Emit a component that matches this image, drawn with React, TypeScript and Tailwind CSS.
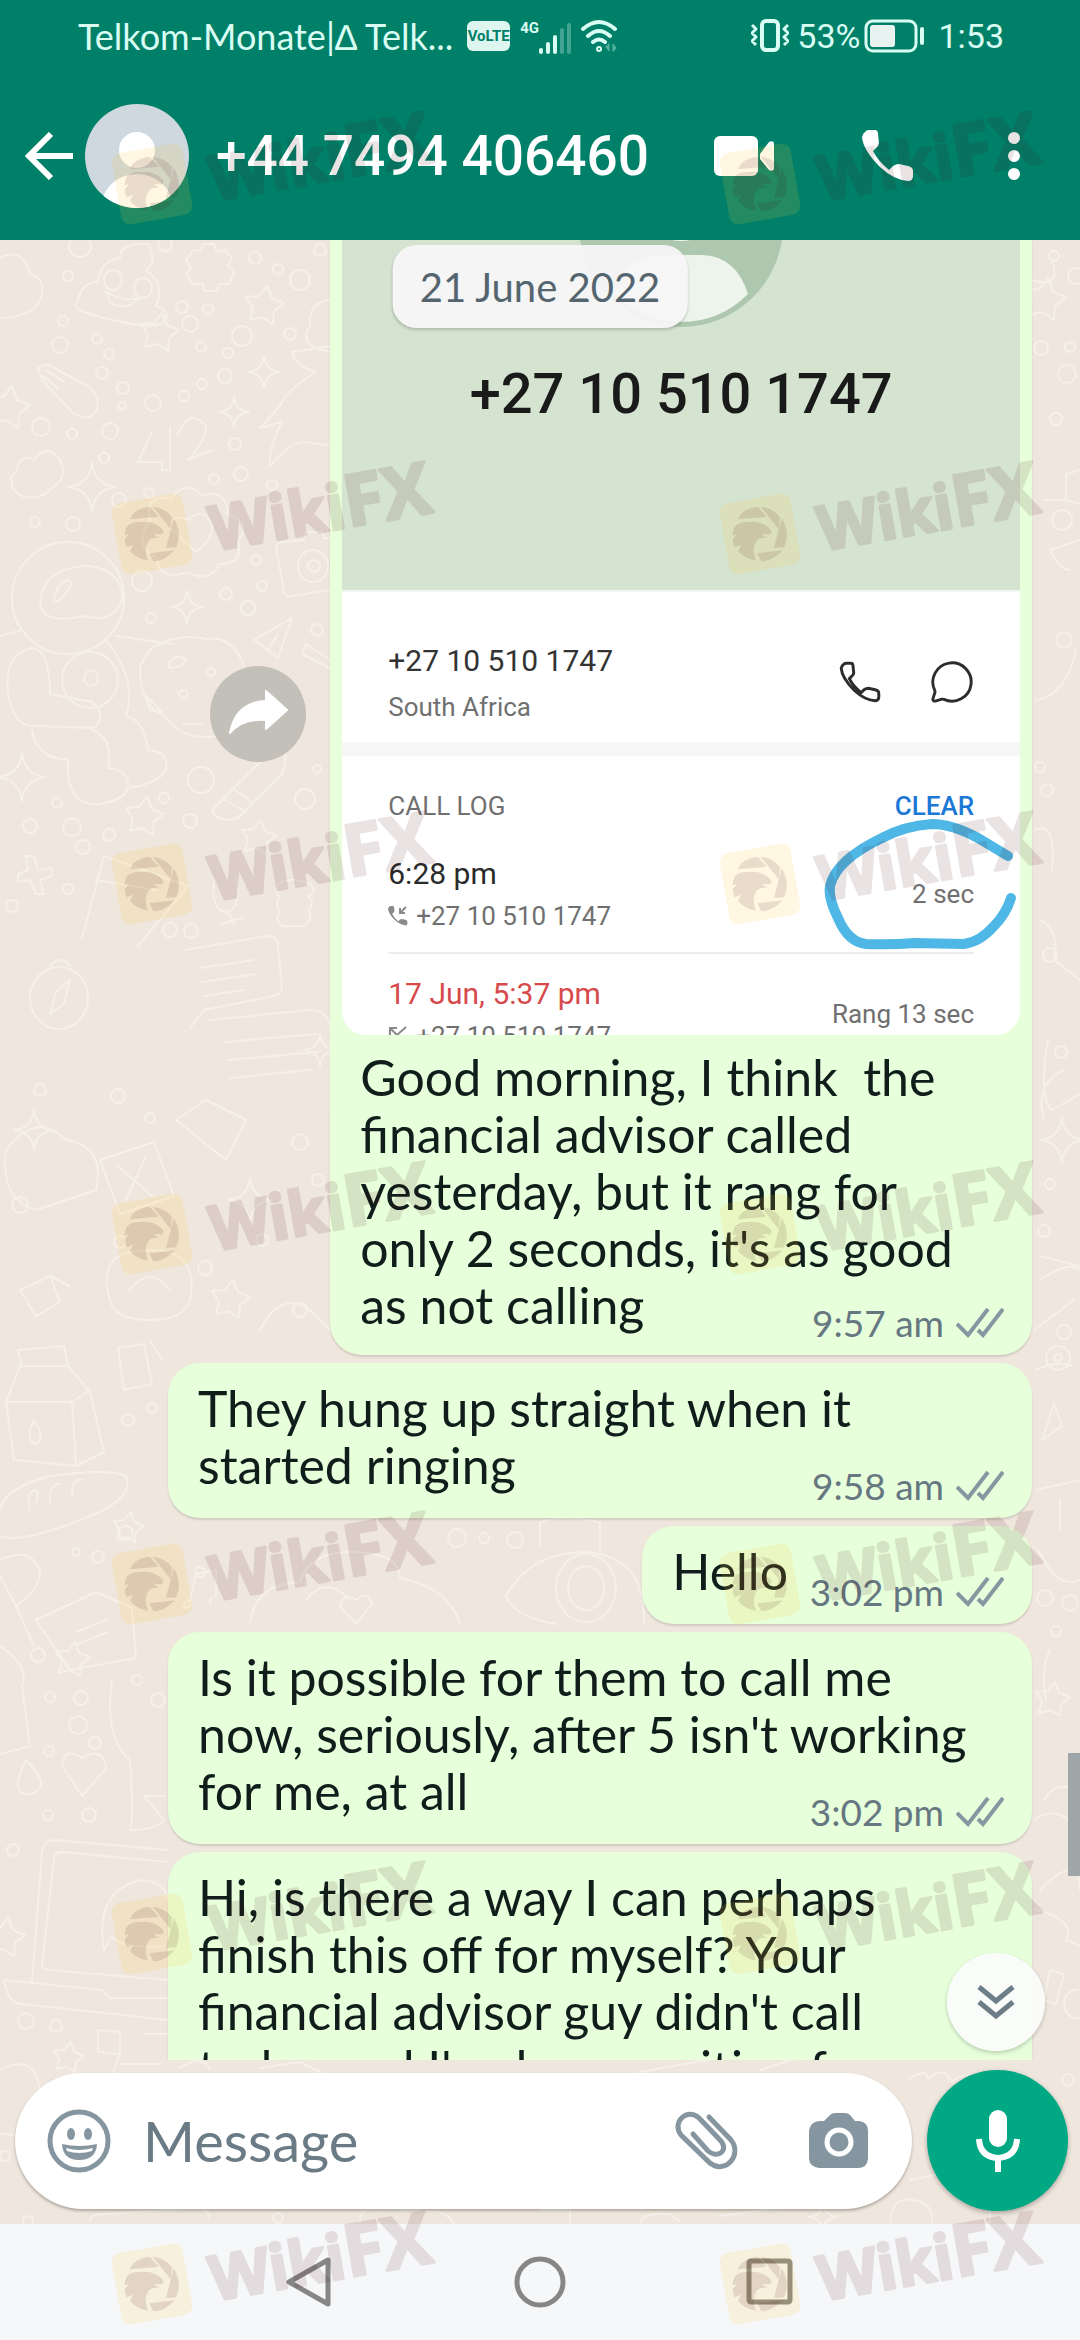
import { ReactNode } from "react";
import { MessageCircle } from "lucide-react";

const PHONE_PATH =
  "M3 2Q4 0 7 0H13Q16 0 16 4L17 13Q17 16 14 18L11 21Q16 31 27 40L31 36Q34 34 37 34L46 36Q51 37 51 41V46Q51 51 46 51Q32 50 18 37Q1 20 0 7Q1 3 3 2Z";

/* Wallpaper */

const dots = [
  [80, 246, 11], [165, 244, 7], [68, 276, 5], [255, 258, 6], [300, 280, 10], [320, 250, 6], [278, 269, 5],
  [63, 321, 5], [60, 345, 8], [97, 339, 5], [109, 354, 5], [190, 324, 8], [182, 307, 6], [208, 309, 5], [242, 336, 10],
  [290, 334, 6], [201, 347, 5], [228, 353, 5], [225, 376, 7], [202, 384, 5], [102, 373, 6], [123, 388, 6], [153, 403, 8],
  [184, 396, 5], [122, 406, 4], [41, 427, 9], [110, 431, 8], [72, 434, 5], [104, 458, 5], [235, 444, 6], [241, 474, 7],
  [214, 479, 5], [272, 485, 5], [149, 493, 5], [119, 500, 7], [73, 524, 7], [35, 522, 5], [142, 581, 10], [256, 560, 5],
  [226, 594, 6], [262, 586, 5], [248, 608, 7], [151, 618, 5], [317, 630, 6], [201, 780, 13], [305, 799, 10], [317, 769, 4],
  [57, 803, 5], [164, 798, 5], [30, 826, 7], [72, 827, 9], [190, 821, 7], [109, 835, 6], [83, 847, 7], [68, 889, 5],
  [170, 930, 7], [191, 931, 7], [12, 906, 6], [118, 1096, 7], [150, 1118, 5], [40, 1090, 6], [300, 1142, 8], [318, 1180, 6],
  [20, 1205, 8], [120, 1242, 6], [205, 1268, 7], [262, 1240, 6], [300, 1310, 7], [128, 1420, 6], [152, 1408, 5],
  [126, 1533, 7], [76, 1552, 4], [98, 1557, 6], [200, 1572, 5], [457, 1538, 9], [484, 1538, 5], [515, 1540, 8],
  [38, 1655, 7], [50, 1697, 5], [81, 1698, 7], [78, 1725, 9], [158, 1700, 7], [137, 1680, 5], [49, 1751, 5], [95, 1743, 6],
  [48, 1815, 5], [89, 1815, 7], [26, 2021, 8], [56, 2026, 6], [13, 1850, 6], [5, 2156, 5], [28, 2221, 5], [278, 2218, 5],
  [1054, 256, 5], [1076, 276, 8], [1041, 348, 7], [1070, 347, 5], [1067, 374, 9], [1056, 419, 6], [1040, 767, 5],
  [1047, 790, 6], [1064, 640, 8], [1050, 1184, 5], [1044, 1231, 6], [1064, 1332, 7], [1045, 1598, 8], [1070, 1603, 8],
  [1056, 1631, 5], [1068, 2080, 6], [1058, 1358, 12], [1058, 1358, 4], [1050, 955, 7], [1062, 520, 10],
];

const stars = [
  [159, 333, 20], [264, 306, 20], [8, 408, 22], [144, 817, 20], [258, 838, 18], [1044, 300, 22], [5, 1938, 20],
  [68, 2058, 16], [128, 1528, 16], [72, 1660, 18], [230, 1300, 20], [1052, 1700, 18],
];

const sparkles = [
  [264, 372, 16], [234, 412, 15], [92, 487, 24], [187, 607, 16], [22, 777, 24], [1062, 1140, 22], [823, 2217, 14],
  [250, 1200, 22], [34, 1130, 20], [320, 1050, 16],
];

const doodles = [
  // clouds
  "M0 258q22-12 30 16q18 6 10 26q-6 16-40 18", "M16 472q4-20 18-12q14-18 26 0q8 18-6 26q-14 16-32 10q-12-6-10-14q-4-4 4-10Z",
  "M330 300q-22 2-20 26q-10 14 6 22l14 4",
  // grinning swirl
  "M78 300q4-18 20-18q2-22 22-24q0-16 28-14q10 18-2 26q20 14 10 36q18 6 6 18q-20 6-78-12Q72 308 78 300Z",
  "M106 292q16 10 34 6q-16 14-30 4Z", "M104 280a9 10 0 1 0 18 0a9 10 0 1 0-18 0M134 288a9 10 0 1 0 18 0a9 10 0 1 0-18 0",
  // gear
  "M200 250l4-6h10l3 8l8-2l7 8l-4 8l6 6l-5 12h-9l-4 7h-11l-3-8l-9 2l-6-10l4-8l-5-6l6-10Z",
  // gloves and 42
  "M38 368q8-6 16 0l34 18q14 12 8 26q-10 12-26-2l-28-30Z", "M42 376l16 12M46 370l18 12",
  "M152 432l-14 30h24v8h8v-42M178 434q12-28 28-8q2 12-18 34l24-10",
  // unicorn
  "M330 346l-38 6q4 14 24 20q-30 18-36 34l-20 22l22-6q-14 26-12 44q20-24 34-24l30 4",
  // heart badge
  "M150 520q-6-26 22-22q14-20 30-2q24-8 26 18q24 8 10 28q6 22-18 22q-12 20-32 8q-28 10-32-14q-24-14-6-38Z",
  "M196 552l-26-24q2-16 18-8q16-14 24 4q2 14-16 28Z",
  // camera
  "M276 548q0-6 8-6l20-2l2-8h16l2 6h6M276 548l8 44q2 6 8 4l38-6M298 566a15 16 0 1 0 30 0a15 16 0 1 0-30 0M308 566a6 6 0 1 0 12 0a6 6 0 1 0-12 0",
  // astronaut
  "M12 598a56 56 0 1 0 112 0a56 56 0 1 0-112 0", "M40 600q6-34 50-34q34 6 32 34q-8 24-38 16q-44 10-44-16Z",
  "M54 600q2-16 14-20q6 2 0 10q-8 14-14 10Z", "M0 636l22-6M32 648q-28 6-24 44q4 34 26 34l60 2q14-12-2-26l-42-8q0-44-18-46Z",
  "M62 680a28 28 0 1 0 56 0a28 28 0 1 0-56 0M84 678a7 8 0 1 0 14 0a7 8 0 1 0-14 0", "M32 730q4 28 36 30q-2 48 32 44q36-6 26-28q-8-8-18-8q6-30-16-38",
  "M106 640q32 40 20 76q18 4 22 34q22 2 18 20q-6 12-36 18M116 636l56 8",
  // cookie
  "M140 668q6-20 24-26q20-8 42-3q24-4 36 22q12 30 0 48q-10 30-38 28q-24 0-40-22q-24-8-24-47Z",
  "M168 664q8-12 18-4q-4 8-16 8ZM178 694q6-8 10 0q-4 8-10 0ZM146 696l16 16l-12-2ZM206 672q6-8 10 0q-4 8-10 0ZM184 724h18",
  // plane, pencil
  "M254 640l38-22l-14 40l-10-8ZM268 650l10-16", "M306 644l24 16M306 644l-4 10l28 14", "M212 810l44-44q16-14 28-18q4 12-2 26l-44 44q-20 6-26-8ZM222 798l24 14M232 788l20 14",
  // cross, board, wine glass, scarf
  "M18 874l10-4l-2-14h8l4 14l14-2v8l-12 4l4 14h-8l-6-14l-12 2Z", "M82 938l22-82l84 30l-50 60M96 880l60 10",
  "M214 880q-4 32 14 32q14-6 8-34M228 912l6 12M222 924l20-6", "M278 884q14-8 32 0q8 8-2 12q8 8 0 14q6 8-4 16H282q-8-8-2-14q-6-10 0-14q-6-8-2-14Z",
  // compass
  "M30 998a28 30 0 1 0 58 0a28 30 0 1 0-58 0M50 1014l6-22l14-12l-6 24ZM50 966q10-12 20 0",
  // speech card
  "M186 950l80-14q12 0 12 10l4 40q0 8-8 10l-70 14l-14 18M200 968l54-8M202 982l54-8M204 996l40-6",
  "M210 1020l100-10q20 0 20 20v80M226 1042l90-8M228 1060l90-8M230 1078l80-8",
  "M6 1150q30-40 60-10q40 6 30 50l-60 20q-36-10-30-60Z", "M100 1160l54-18l20 54l-54 18ZM118 1166l34 30M146 1156l-20 44",
  "M176 1120l30-20l40 20l-20 40Z", "M20 1290l30-14l10 26l-24 14ZM50 1276l20 10", "M110 1300q-16-50 40-50q50 0 40 50q-6 20-40 20q-36 0-40-20Z",
  "M130 1290q20-26 40 0M260 1330q20-40 50-20l20 20",
  // milk carton
  "M6 1402l14-36h48l22 26l14 60l-28 14l-62-6ZM6 1402h66l18-12M72 1402l4 62M34 1420q-10 20 2 24q10-6-2-24ZM22 1366l-4-16l46-4l4 20",
  "M118 1348l26-4l8 40l-28 6ZM150 1340l12 20",
  // bread
  "M0 1510q4-22 50-34q60-8 76 0q10 24-46 44q-60 24-80 16M30 1510q-4-20 6-20q4 4 0 12M50 1504q-2-20 10-20M72 1496q0-18 10-16",
  // leaf, paper
  "M0 1560q30-14 40 10q0 20-24 36L0 1576M16 1606l18 40", "M36 1620l60-28l36 16l4 50l-66 12ZM76 1632l30-12M78 1644l30-12",
  // cupcake, ring
  "M250 1624q4-40 50-42q10-30 50-30q50 0 50 26q50 10 60 46M306 1600q20-26 44 0M340 1606l16 18l16-20q-4-14-16-4q-12-8-16 6",
  "M506 1596q24-44 80-44q60 4 58 72M506 1596q10 22 50 28M556 1588a30 34 0 1 0 60 0a30 34 0 1 0-60 0M568 1588a18 22 0 1 0 36 0a18 22 0 1 0-36 0M540 1546v-24q24-8 60 0v28",
  "M190 1600l6-26l20-4v26M190 1600q-8 2-6 8q8 0 6-8M216 1596q-8 2-6 8",
  // bottle, drop, heart
  "M0 1646q30 20 22 40l8 60l-30 8", "M112 1680q-8 60 18 80q4 60 0 70q26 0 34-10l-20-24h20", "M26 1760q-18 36 4 34q24-6-4-34ZM82 1796l-20-30q2-20 20-8q22-12 24 10Z",
  // laptop
  "M32 1982l10-130q2-12 14-12l112 10M42 1964l12-104q0-8 8-8l106 10M42 1964q0 6 6 6l120 10M4 1980l98 10l8 8h58M4 1980q4 24 18 24l146 16",
  "M104 1950q-10-60 38-70q24 2 26 20M104 1950l8-14q10 14 56 10",
  // gamepad and clocks below the list
  "M98 2030l22 2v22l-22-2ZM144 2034h24M120 2054l-8 20M0 2070q40-20 40 30q0 40-40 34M120 2064h40M180 2068q20-14 30 0M260 2068l40-6l20 10",
  "M90 2222q0-8 14-8l96-6q10 2 8 10M360 2222q0-16 20-14l60 4q10 4 14 12M640 2222q4-10 30-8l10 8M720 2216l60-8M540 2210h30v12",
  "M640 2072l90-16M760 2070l60-20M908 2080q20-14 20 0q14-16 24 2q20-14 24-2M910 2180l30-6l14 10l36 2v38M890 2222q2-26 24-22q20 4 18 22",
  // right edge
  "M1032 280q30 10 20-20M1080 470l-14 4v26l14 4M1044 500h20M1080 540l-30 10q10 20 20 20M1036 700q30-4 40-50",
  "M1034 1330l40-30M1044 1120q-10-36 20-50M1040 1256l40 10M1048 1040q-10 60 4 70l28-16M1060 1046a6 6 0 1 0 2 0M1036 1370q20-10 36-4",
  "M1040 920q20 10 14 40l26 20M1036 830q20-10 16 40M1040 1280q30-20 40-10M1042 1440l20-14l-8-22ZM1036 1490l44-10M1060 1500v30",
  "M1038 1550q20 40 42 30M1050 1650q-10 20-4 50M1044 1800q10-20 36-10M1034 1820q30-20 46 20M1036 1910q40 10 30 30l14 6",
  "M1050 1970l14 4l-8 30l-12-4ZM1078 1990q-14 0-14 16q4 14 16 12M1040 1890q40-40 40 0",
];

function starPath(cx: number, cy: number, r: number) {
  const pts = Array.from({ length: 10 }, (_, i) => {
    const a = (Math.PI / 5) * i - 1.4;
    const d = i % 2 ? r * 0.55 : r;
    return `${Math.round(cx + d * Math.cos(a))} ${Math.round(cy + d * Math.sin(a))}`;
  });
  return `M${pts.join("L")}Z`;
}

function Wallpaper() {
  return (
    <svg className="absolute left-0 top-0 h-full w-full" aria-hidden="true">
      <g transform="translate(0 -240)" fill="none" stroke="#f6f0ea" strokeWidth="2" strokeLinejoin="round" strokeLinecap="round">
        {dots.map(([x, y, r], i) => (
          <circle key={i} cx={x} cy={y} r={r} />
        ))}
        {stars.map(([x, y, r], i) => (
          <path key={i} d={starPath(x, y, r)} />
        ))}
        {sparkles.map(([x, y, r], i) => (
          <path
            key={i}
            transform={`translate(${x} ${y}) scale(${r / 10})`}
            vectorEffect="non-scaling-stroke"
            d="M0-10Q1-1 10 0Q1 1 0 10Q-1 1-10 0Q-1-1 0-10Z"
          />
        ))}
        {doodles.map((d, i) => (
          <path key={i} d={d} />
        ))}
      </g>
    </svg>
  );
}

/* Watermark */

const watermarkRows = [0, 350, 700, 1050, 1400, 1750, 2100];

function WatermarkMark({ x, y }: { x: number; y: number }) {
  return (
    <g transform={`translate(${x} ${y})`}>
      <rect x="-36" y="-36" width="72" height="72" rx="9" transform="rotate(-10)" fill="#ffc832" fillOpacity="0.14" />
      <g fill="#480a10" opacity="0.11">
        <g transform="translate(-42 -56) scale(0.3333)">
          <path d="M72 104Q95 87 120 87L146 116L60 124Q64 112 72 104Z" />
          <path d="M128 86Q164 90 186 117L182 154Z" />
          <path d="M191 120Q218 165 198 208L168 210Z" />
          <path d="M194 217Q164 250 130 250L118 226Z" />
          <path d="M50 146Q62 130 96 132Q128 126 158 154Q164 164 154 170Q140 166 132 170L150 180Q122 176 114 192Q100 210 114 248Q78 242 60 218L70 200L50 208Q44 196 44 184L58 168L44 172Q44 158 50 146Z" />
        </g>
        <text
          transform="translate(62 17) rotate(-10)"
          fontFamily="'Open Sans', sans-serif"
          fontWeight="700"
          fontSize="62"
          stroke="#480a10"
          strokeWidth="3"
          strokeLinejoin="round"
        >
          Wiki
          <tspan fontSize="72">FX</tspan>
        </text>
      </g>
    </g>
  );
}

function Watermark() {
  return (
    <svg className="pointer-events-none absolute inset-0 z-30 h-full w-full" aria-hidden="true">
      {watermarkRows.map((y) => (
        <g key={y}>
          <WatermarkMark x={152} y={184 + y} />
          <WatermarkMark x={760} y={184 + y} />
        </g>
      ))}
    </svg>
  );
}

/* Header */

function StatusBar() {
  return (
    <div className="flex h-[72px] items-center justify-between pl-[78px] pr-[76px] text-[#d9fdf3]">
      <div className="flex items-center">
        <span className="font-['Lato',sans-serif] text-[36px]">Telkom-Monate|∆ Telk...</span>
        <span className="ml-[14px] flex h-[30px] w-[43px] items-center justify-center rounded-md bg-[#dff5f0] text-[15px] font-bold text-[#008069]">
          VoLTE
        </span>
        <span className="mb-4 ml-[10px] text-[15px] font-bold">4G</span>
        <svg width="34" height="32" viewBox="0 0 34 32" fill="currentColor" className="mt-1">
          <rect x="0" y="26" width="4" height="6" rx="2" />
          <rect x="7" y="20" width="4" height="12" rx="2" />
          <rect x="14" y="13" width="4" height="19" rx="2" />
          <rect x="21" y="6" width="4" height="26" rx="2" opacity="0.3" />
          <rect x="28" y="1" width="4" height="31" rx="2" opacity="0.3" />
        </svg>
        <svg width="38" height="34" viewBox="0 0 38 34" fill="none" stroke="currentColor" strokeWidth="4" strokeLinecap="round" className="ml-2">
          <path d="M2 10Q18-4 34 10M7 17Q18 7 29 17M12 23Q18 18 24 23" />
          <circle cx="18" cy="30" r="1" />
          <path d="M28 25v7l-3-4ZM32 32v-7l3 4Z" strokeWidth="1" fill="currentColor" opacity="0.4" />
        </svg>
      </div>
      <div className="flex items-center text-[34px]">
        <svg width="38" height="34" viewBox="0 0 38 34" fill="none" stroke="currentColor" strokeWidth="3" strokeLinejoin="round">
          <rect x="11" y="2" width="16" height="29" rx="4" strokeWidth="4" />
          <path d="M1 6l4 4l-4 4l4 4l-4 4l4 4M37 6l-4 4l4 4l-4 4l4 4l-4 4" />
        </svg>
        <span className="ml-2">53%</span>
        <svg width="62" height="34" viewBox="0 0 62 34" fill="none" className="ml-1">
          <rect x="2" y="2" width="50" height="30" rx="7" stroke="currentColor" strokeWidth="3" />
          <rect x="6" y="6" width="25" height="22" rx="3" fill="#e8f2f0" />
          <rect x="56" y="8" width="4" height="18" rx="2" fill="currentColor" />
        </svg>
        <span className="ml-3">1:53</span>
      </div>
    </div>
  );
}

function ChatHeader() {
  return (
    <header className="bg-[#008069] text-white">
      <StatusBar />
      <div className="flex h-[168px] items-center pl-[25px] pr-[54px]">
        <button type="button" aria-label="Back" className="mr-3">
          <svg width="48" height="48" viewBox="0 0 48 48" fill="none" stroke="currentColor" strokeWidth="6">
            <path d="M48 24H4M26 2L4 24L26 46" />
          </svg>
        </button>
        <svg width="105" height="105" viewBox="0 0 105 105" aria-hidden="true">
          <clipPath id="avatar">
            <circle cx="52" cy="52" r="52" />
          </clipPath>
          <g clipPath="url(#avatar)">
            <rect width="105" height="105" fill="#cfd8df" />
            <circle cx="52" cy="46" r="18" fill="#fff" />
            <ellipse cx="52" cy="104" rx="36" ry="34" fill="#fff" />
          </g>
        </svg>
        <h1 className="ml-[26px] text-[55px] font-medium">+44 7494 406460</h1>
        <div className="ml-auto flex items-center gap-[88px]">
          <button type="button" aria-label="Video call">
            <svg width="60" height="40" viewBox="0 0 60 40" fill="currentColor">
              <rect width="44" height="40" rx="6" />
              <path d="M46 18L55 6Q60 4 60 8V32Q60 36 55 34L46 23Z" />
            </svg>
          </button>
          <button type="button" aria-label="Call">
            <svg width="52" height="52" viewBox="0 0 52 52" fill="currentColor">
              <path d={PHONE_PATH} />
            </svg>
          </button>
          <button type="button" aria-label="More options">
            <svg width="24" height="52" viewBox="0 0 24 52" fill="currentColor">
              <circle cx="12" cy="8" r="6" />
              <circle cx="12" cy="26" r="6" />
              <circle cx="12" cy="44" r="6" />
            </svg>
          </button>
        </div>
      </div>
    </header>
  );
}

/* Messages */

function Stamp({ time }: { time: string }) {
  return (
    <span className="absolute bottom-3 right-7 flex items-center gap-3 text-[37px] leading-[40px] text-[#667781]">
      {time}
      <svg width="48" height="30" viewBox="0 0 48 30" fill="none" stroke="#8597a1" strokeWidth="4">
        <path d="M1 16L12 27L32 1M22 22L27 27L47 1" />
      </svg>
    </span>
  );
}

type BubbleProps = {
  text: string;
  time?: string;
  children?: ReactNode;
};

function Bubble({ text, time, children }: BubbleProps) {
  return (
    <div
      className={
        children
          ? "relative w-[68%] rounded-b-[32px] bg-[#e7ffdb] px-3 pb-[21px] shadow-[0_2px_2px_rgba(60,50,40,0.16)]"
          : "relative max-w-[864px] rounded-[32px] bg-[#e7ffdb] pb-6 pl-[30px] pr-9 pt-[17px] shadow-[0_2px_2px_rgba(60,50,40,0.16)]"
      }
    >
      {children}
      <p
        className={
          children
            ? "mt-[14px] whitespace-pre-wrap pl-[18px] pr-12 text-[50px] leading-[57px]"
            : "whitespace-pre-wrap text-[50px] leading-[57px]"
        }
      >
        {text}
        {/* keeps the last line clear of the time */}
        {time && <span className="inline-block w-52" />}
      </p>
      {time && <Stamp time={time} />}
    </div>
  );
}

function LogEntry({ title, missed, note }: { title: string; missed?: boolean; note: string }) {
  return (
    <li className="flex items-center justify-between">
      <div>
        <p className={missed ? "text-[30px] leading-9 text-[#d64a4c]" : "text-[30px] leading-9 text-[#2a2a2a]"}>{title}</p>
        <p className="mt-2 flex items-center gap-2 leading-8">
          <svg width="20" height="20" viewBox="0 0 20 20" fill="none" stroke="#8a8a8a" strokeWidth="2">
            {missed ? (
              <path d="M2 9V2h7M2 2l7 7l9-8" />
            ) : (
              <>
                <path d={PHONE_PATH} transform="scale(0.38)" fill="#8a8a8a" stroke="none" />
                <path d="M18 1l-6 6M12 2v5h5" />
              </>
            )}
          </svg>
          +27 10 510 1747
        </p>
      </div>
      <span>{note}</span>
    </li>
  );
}

function CallScreenshot() {
  return (
    <div className="h-[795px] overflow-hidden rounded-b-3xl bg-white font-['Roboto',sans-serif] text-[26px] text-[#707070]">
      <div className="flex h-[350px] flex-col items-center bg-[#d5e3d1]">
        <svg width="206" height="88" viewBox="0 0 206 88" aria-hidden="true">
          <circle cx="103" cy="-15" r="102" fill="#aec7af" />
          <ellipse cx="103" cy="-8" rx="20" ry="9" fill="#edf4ec" />
          <path d="M36 54Q48 16 82 15H124Q158 16 170 54Q142 82 103 82Q64 82 36 54Z" fill="#edf4ec" />
        </svg>
        <p className="mt-[34px] text-[56px] font-medium leading-[64px] text-[#1a1a1a]">+27 10 510 1747</p>
      </div>
      <div className="flex h-[152px] items-start justify-between border-t-2 border-[#f2f4f1] pl-[46px] pr-[45px] pt-[51px]">
        <div>
          <p className="text-[30px] leading-9 text-[#333]">+27 10 510 1747</p>
          <p className="mt-3 leading-8">South Africa</p>
        </div>
        <div className="mt-4 flex items-center gap-12 text-[#2c2c2c]">
          <svg width="42" height="42" viewBox="-3 -3 57 57" fill="none" stroke="currentColor" strokeWidth="4">
            <path d={PHONE_PATH} />
          </svg>
          <MessageCircle size={46} strokeWidth={1.5} />
        </div>
      </div>
      <div className="h-[14px] bg-[#f6f6f6]" />
      <div className="relative px-[46px] pt-[34px]">
        <div className="flex justify-between leading-8">
          <h2>CALL LOG</h2>
          <button type="button" className="font-medium text-[#1b78d6]">CLEAR</button>
        </div>
        <ul className="mt-[34px]">
          <LogEntry title="6:28 pm" note="2 sec" />
          <li className="mb-[22px] mt-5 h-[2px] bg-[#ececec]" aria-hidden="true" />
          <LogEntry title="17 Jun, 5:37 pm" missed note="Rang 13 sec" />
        </ul>
        {/* marker ring drawn round the call length */}
        <svg className="absolute right-0 top-0" width="200" height="200" viewBox="478 0 200 200" fill="none" stroke="#4fb7e6" strokeWidth="10" strokeLinecap="round" strokeLinejoin="round">
          <path d="M666 100L636 82Q610 68 590 68Q562 70 540 82Q494 104 488 130Q486 142 496 162Q506 186 524 188Q550 189 572 187L622 188Q638 186 652 170Q664 158 669 142" />
        </svg>
      </div>
    </div>
  );
}

function Messages() {
  return (
    <section className="relative min-h-0 flex-1 overflow-hidden text-[#101d1b]">
      <div className="flex flex-col items-end gap-2 pr-12">
        <div className="flex w-full items-start justify-end">
          <button type="button" aria-label="Forward" className="mr-6 mt-[426px] shrink-0 rounded-full bg-[#c0bdb6]/95">
            <svg width="96" height="96" viewBox="0 0 96 96" fill="#fff" stroke="#fff" strokeWidth="2" strokeLinejoin="round">
              <path d="M20 67Q26 36 56 35V25L77 44L56 63V54Q32 52 20 67Z" />
            </svg>
          </button>
          <Bubble
            text="Good morning, I think  the financial advisor called yesterday, but it rang for only 2 seconds, it's as good as not calling"
            time="9:57 am"
          >
            <CallScreenshot />
          </Bubble>
        </div>
        <Bubble text="They hung up straight when it started ringing" time="9:58 am" />
        <Bubble text="Hello" time="3:02 pm" />
        <Bubble text="Is it possible for them to call me now, seriously, after 5 isn't working for me, at all" time="3:02 pm" />
        <Bubble text="Hi, is there a way I can perhaps finish this off for myself? Your financial advisor guy didn't call today and I've been waiting for" />
      </div>

      <p className="absolute left-1/2 top-[5px] -translate-x-1/2 whitespace-nowrap rounded-3xl bg-[#f6f6f6]/95 px-[27px] pb-[17px] pt-[19px] text-[40px] leading-[47px] text-[#54656f] shadow-[0_2px_3px_rgba(0,0,0,0.18)]">
        21 June 2022
      </p>
      <button
        type="button"
        aria-label="Scroll to latest"
        className="absolute bottom-[9px] right-[35px] flex h-[98px] w-[98px] items-center justify-center rounded-full bg-[#fafcfa]/95 shadow-[0_2px_4px_rgba(0,0,0,0.2)]"
      >
        <svg width="38" height="38" viewBox="0 0 38 38" fill="none" stroke="#6d7d87" strokeWidth="5">
          <path d="M2 4L19 18L36 4M2 19L19 33L36 19" />
        </svg>
      </button>
    </section>
  );
}

/* Bottom */

function Composer() {
  return (
    <form className="relative flex items-center gap-[15px] pb-[13px] pl-[15px] pr-3 pt-[10px]" onSubmit={(e) => e.preventDefault()}>
      <div className="flex h-[136px] min-w-0 flex-1 items-center rounded-full bg-white pl-8 pr-[43px] text-[#8696a0] shadow-[0_2px_3px_rgba(60,50,40,0.35)]">
        <button type="button" aria-label="Emoji">
          <svg width="64" height="64" viewBox="0 0 64 64" fill="currentColor">
            <circle cx="32" cy="32" r="29" fill="none" stroke="currentColor" strokeWidth="5" />
            <ellipse cx="24" cy="25" rx="4" ry="6" />
            <ellipse cx="41" cy="25" rx="4" ry="6" />
            <path d="M15 35Q32 39 50 35Q49 51 32 51Q16 51 15 35Z" />
            <path d="M19 39Q32 43 46 39L45 42Q32 46 20 42Z" fill="#fff" />
          </svg>
        </button>
        <input
          type="text"
          aria-label="Message"
          placeholder="Message"
          className="ml-8 min-w-0 flex-1 bg-transparent text-[56px] leading-[68px] text-[#101d1b] outline-none placeholder:text-[#6b7b85]"
        />
        <button type="button" aria-label="Attach" className="mr-[70px]">
          <svg width="66" height="60" viewBox="-2 -2 66 60" fill="none" stroke="currentColor" strokeWidth="5" strokeLinecap="round">
            <path d="M34 4L56 27C68 42 50 62 35 50L6 22C-4 9 13-6 24 5L46 28C54 38 42 46 33 38L18 21" />
          </svg>
        </button>
        <button type="button" aria-label="Camera">
          <svg width="60" height="56" viewBox="0 0 60 56" fill="currentColor">
            <path d="M10 8H15L21 2Q23 0 26 0H36Q39 0 41 2L46 8H50Q59 9 59 18V46Q58 55 49 55H10Q1 54 0 46V18Q1 9 10 8Z" />
            <circle cx="30" cy="29" r="12" fill="none" stroke="#fff" strokeWidth="5" />
          </svg>
        </button>
      </div>
      <button
        type="button"
        aria-label="Record voice message"
        className="flex h-[141px] w-[141px] items-center justify-center rounded-full bg-[#00a884] text-white shadow-[0_2px_5px_rgba(0,0,0,0.3)]"
      >
        <svg width="44" height="62" viewBox="0 0 44 62" fill="none" stroke="currentColor">
          <rect x="13" y="0" width="18" height="37" rx="9" fill="currentColor" stroke="none" />
          <path d="M3 29Q4 47 22 48Q40 47 41 29M22 48V62" strokeWidth="6" />
        </svg>
      </button>
    </form>
  );
}

function NavBar() {
  return (
    <nav className="flex h-[116px] shrink-0 items-center justify-center gap-[179px] bg-[#f6f7f9] text-[#868686]">
      <button type="button" aria-label="Back">
        <svg width="50" height="52" viewBox="0 0 50 52" fill="none" stroke="currentColor" strokeWidth="5" strokeLinejoin="round">
          <path d="M43 4V48L4 26Z" />
        </svg>
      </button>
      <button type="button" aria-label="Home">
        <svg width="52" height="52" viewBox="0 0 52 52" fill="none" stroke="currentColor" strokeWidth="5">
          <circle cx="26" cy="26" r="23" />
        </svg>
      </button>
      <button type="button" aria-label="Recent apps">
        <svg width="50" height="52" viewBox="0 0 50 52" fill="none" stroke="currentColor" strokeWidth="5">
          <rect x="4" y="5" width="41" height="41" rx="2" />
        </svg>
      </button>
    </nav>
  );
}

export default function App() {
  return (
    <div className="relative flex h-screen flex-col overflow-hidden bg-[#efe7de] font-['Roboto',sans-serif]">
      <ChatHeader />
      <main className="relative flex min-h-0 flex-1 flex-col font-['Lato',sans-serif]">
        <Wallpaper />
        <Messages />
        <span className="absolute right-0 top-[1513px] h-[123px] w-3 bg-[#9ea6a8]" aria-hidden="true" />
        <Composer />
      </main>
      <NavBar />
      <Watermark />
    </div>
  );
}
